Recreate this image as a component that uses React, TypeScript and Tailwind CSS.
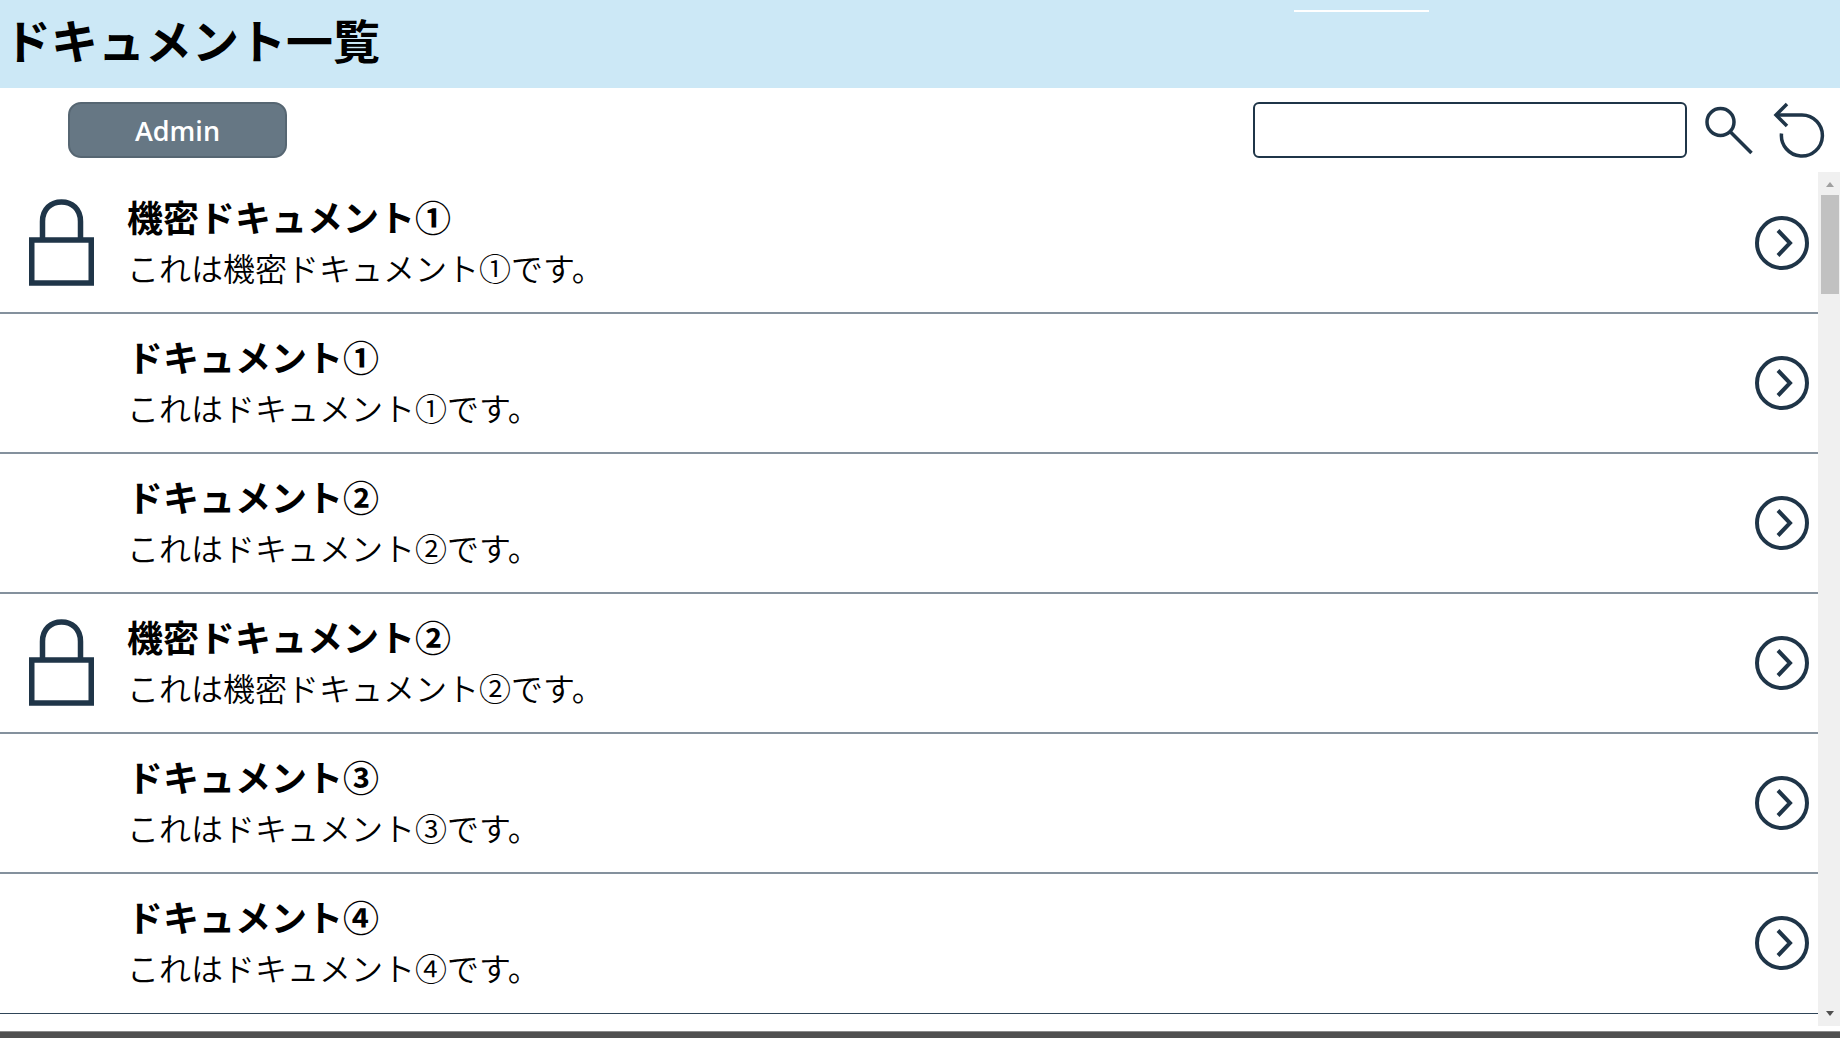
type Doc = { title: string; description: string; locked: boolean };

const documents: Doc[] = [
  { title: "機密ドキュメント①", description: "これは機密ドキュメント①です。", locked: true },
  { title: "ドキュメント①", description: "これはドキュメント①です。", locked: false },
  { title: "ドキュメント②", description: "これはドキュメント②です。", locked: false },
  { title: "機密ドキュメント②", description: "これは機密ドキュメント②です。", locked: true },
  { title: "ドキュメント③", description: "これはドキュメント③です。", locked: false },
  { title: "ドキュメント④", description: "これはドキュメント④です。", locked: false },
];

function LockIcon() {
  return (
    <svg width="66" height="88" viewBox="0 0 66 88" fill="none" stroke="currentColor" strokeWidth="5.5" aria-hidden="true">
      <rect x="2.75" y="41" width="59.500" height="43" />
      <path d="M13.5 41V22.5C13.5 10 22 3 32.500 3S51.500 10 51.500 22.500V41" />
    </svg>
  );
}

function ChevronCircleIcon() {
  return (
    <svg width="54" height="54" viewBox="0 0 54 54" fill="none" stroke="currentColor" strokeWidth="4" aria-hidden="true">
      <circle cx="27" cy="27" r="25" />
      <path d="M23 14.500L35 27L23 39.500" />
    </svg>
  );
}

function SearchIcon() {
  return (
    <svg width="48" height="50" viewBox="0 0 48 50" fill="none" stroke="currentColor" strokeWidth="3.5" aria-hidden="true">
      <circle cx="15.500" cy="17" r="13.500" />
      <path d="M25.500 27L46.500 48" />
    </svg>
  );
}

function UndoIcon() {
  return (
    <svg width="52" height="56" viewBox="0 0 52 56" fill="none" stroke="currentColor" strokeWidth="3.5" aria-hidden="true">
      <path d="M14 2L3 13L14 24" />
      <path d="M3 13H29A20.500 20.500 0 1 1 8.500 31.500" />
    </svg>
  );
}

function DocumentRow({ doc }: { doc: Doc }) {
  return (
    <li className="flex h-[140px] shrink-0 items-start border-b-2 border-[#84919d] pr-[9px] last:border-b last:border-[#2f4558]">
      <div className="w-[127px] shrink-0 pt-[25px] pl-[29px] text-[#1f3548]">{doc.locked && <LockIcon />}</div>
      <div className="min-w-0 flex-1 pt-4">
        <h2 className="truncate text-[36px] leading-[52px] font-bold">{doc.title}</h2>
        <p className="truncate text-[32px] leading-[50px] font-[350]">{doc.description}</p>
      </div>
      <button type="button" aria-label={`${doc.title}を開く`} className="mt-[42px] shrink-0 text-[#1f3548]">
        <ChevronCircleIcon />
      </button>
    </li>
  );
}

function ScrollTrack() {
  return (
    <div className="flex w-[22px] shrink-0 flex-col items-end bg-[#f0f0f0]" aria-hidden="true">
      <svg className="mt-2.5 mr-1.5 mb-2 shrink-0" width="8" height="5" viewBox="0 0 8 5" fill="#a0a0a0">
        <path d="M4 0L8 5H0Z" />
      </svg>
      <div className="mr-px h-[99px] w-[18px] bg-[#c1c1c1]" />
      <svg className="mt-auto mr-1.5 mb-2.5 shrink-0" width="8" height="5" viewBox="0 0 8 5" fill="#505050">
        <path d="M0 0H8L4 5Z" />
      </svg>
    </div>
  );
}

export default function App() {
  return (
    <div className="flex h-screen flex-col overflow-hidden bg-white font-['Open_Sans','Noto_Sans_CJK_JP',sans-serif] text-black">
      <header className="relative flex h-[88px] shrink-0 items-start bg-[#cce8f6] pl-1">
        <h1 className="font-['Noto_Sans_CJK_JP',sans-serif] text-[47px] leading-[78px] font-bold">ドキュメント一覧</h1>
        <div className="absolute top-2.5 right-[411px] h-0.5 w-[135px] bg-white" />
      </header>
      <div className="flex h-[84px] shrink-0 items-start pt-3.5 pr-[15px] pl-[68px]">
        <button
          type="button"
          className="h-14 w-[219px] rounded-[13px] border-2 border-[#566672] bg-[#667784] text-[27px] leading-[54px] font-semibold text-white"
        >
          Admin
        </button>
        <form className="ml-auto flex items-start text-[#1f3548]" onSubmit={(e) => e.preventDefault()}>
          <input
            type="text"
            aria-label="検索"
            className="h-14 w-[434px] rounded-md border-2 border-[#1f3548] bg-white px-3 text-[28px] text-black outline-none"
          />
          <button type="submit" aria-label="検索する" className="mt-[3px] ml-[18px]">
            <SearchIcon />
          </button>
          <button type="reset" aria-label="元に戻す" className="ml-5">
            <UndoIcon />
          </button>
        </form>
      </div>
      <main className="flex min-h-0 flex-1">
        <ul className="flex min-w-0 flex-1 flex-col overflow-hidden pt-0.5 font-['Noto_Sans_CJK_JP',sans-serif]">
          {documents.map((doc) => (
            <DocumentRow key={doc.title} doc={doc} />
          ))}
        </ul>
        <ScrollTrack />
      </main>
      <footer className="mt-[5px] h-[7px] shrink-0 border-t border-[#8a8a8a] bg-[#505050]" />
    </div>
  );
}
